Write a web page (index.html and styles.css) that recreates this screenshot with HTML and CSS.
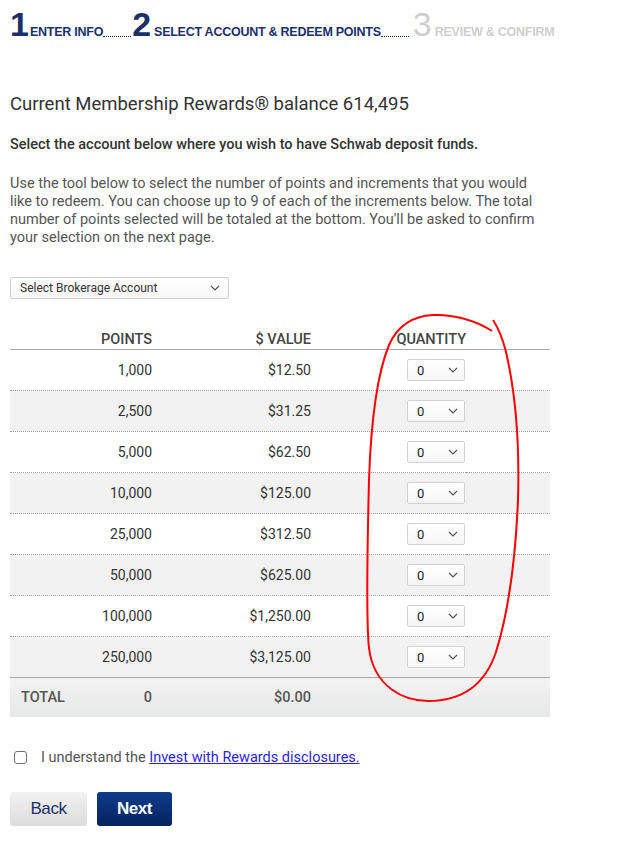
FILE: index.html
```html
<!DOCTYPE html>
<html>
<head>
<meta charset="utf-8">
<link rel="stylesheet" href="styles.css">
</head>
<body>
<div class="page">
  <div class="steps">
    <span class="step active"><span class="num num-1">1</span><span class="lbl">ENTER INFO</span></span>
    <span class="dots"></span>
    <span class="step active"><span class="num">2</span><span class="lbl">SELECT ACCOUNT &amp; REDEEM POINTS</span></span>
    <span class="dots dots-2"></span>
    <span class="step off"><span class="num">3</span><span class="lbl">REVIEW &amp; CONFIRM</span></span>
  </div>

  <h1 class="balance">Current Membership Rewards® balance 614,495</h1>
  <p class="lead">Select the account below where you wish to have Schwab deposit funds.</p>
  <p class="info">Use the tool below to select the number of points and increments that you would like to redeem. You can choose up to 9 of each of the increments below. The total number of points selected will be totaled at the bottom. You'll be asked to confirm your selection on the next page.</p>

  <div class="account-select">
    <span>Select Brokerage Account</span>
    <svg class="chev" width="10" height="6" viewBox="0 0 10 6"><path d="M1 1l4 4 4-4" fill="none" stroke="#555" stroke-width="1.2"/></svg>
  </div>

  <div class="table-wrap">
    <table class="points">
      <thead>
        <tr><th class="c-pts">POINTS</th><th class="c-val">$ VALUE</th><th class="c-qty">QUANTITY</th><th class="c-rest"></th></tr>
      </thead>
      <tbody>
        <tr><td class="c-pts">1,000</td><td class="c-val">$12.50</td><td class="c-qty"><span class="qty">0<svg width="10" height="6" viewBox="0 0 10 6"><path d="M1 1l4 4 4-4" fill="none" stroke="#555" stroke-width="1.2"/></svg></span></td><td></td></tr>
        <tr class="alt"><td class="c-pts">2,500</td><td class="c-val">$31.25</td><td class="c-qty"><span class="qty">0<svg width="10" height="6" viewBox="0 0 10 6"><path d="M1 1l4 4 4-4" fill="none" stroke="#555" stroke-width="1.2"/></svg></span></td><td></td></tr>
        <tr><td class="c-pts">5,000</td><td class="c-val">$62.50</td><td class="c-qty"><span class="qty">0<svg width="10" height="6" viewBox="0 0 10 6"><path d="M1 1l4 4 4-4" fill="none" stroke="#555" stroke-width="1.2"/></svg></span></td><td></td></tr>
        <tr class="alt"><td class="c-pts">10,000</td><td class="c-val">$125.00</td><td class="c-qty"><span class="qty">0<svg width="10" height="6" viewBox="0 0 10 6"><path d="M1 1l4 4 4-4" fill="none" stroke="#555" stroke-width="1.2"/></svg></span></td><td></td></tr>
        <tr><td class="c-pts">25,000</td><td class="c-val">$312.50</td><td class="c-qty"><span class="qty">0<svg width="10" height="6" viewBox="0 0 10 6"><path d="M1 1l4 4 4-4" fill="none" stroke="#555" stroke-width="1.2"/></svg></span></td><td></td></tr>
        <tr class="alt"><td class="c-pts">50,000</td><td class="c-val">$625.00</td><td class="c-qty"><span class="qty">0<svg width="10" height="6" viewBox="0 0 10 6"><path d="M1 1l4 4 4-4" fill="none" stroke="#555" stroke-width="1.2"/></svg></span></td><td></td></tr>
        <tr><td class="c-pts">100,000</td><td class="c-val">$1,250.00</td><td class="c-qty"><span class="qty">0<svg width="10" height="6" viewBox="0 0 10 6"><path d="M1 1l4 4 4-4" fill="none" stroke="#555" stroke-width="1.2"/></svg></span></td><td></td></tr>
        <tr class="alt"><td class="c-pts">250,000</td><td class="c-val">$3,125.00</td><td class="c-qty"><span class="qty">0<svg width="10" height="6" viewBox="0 0 10 6"><path d="M1 1l4 4 4-4" fill="none" stroke="#555" stroke-width="1.2"/></svg></span></td><td></td></tr>
      </tbody>
      <tfoot>
        <tr><td class="c-pts"><span class="total-lbl">TOTAL</span>0</td><td class="c-val">$0.00</td><td></td><td></td></tr>
      </tfoot>
    </table>
    <svg class="annot" width="160" height="400" viewBox="360 310 160 400"><path d="M492 331 C475 320 452 314 433 315 C412 316 397 327 389 345 C378 372 371 420 369 480 C367 560 366 620 369 648 C374 688 405 701 428 701 C458 701 484 688 496 652 C506 620 515 570 518 500 C520 432 513 382 506 352 C502 336 497 326 493 320" fill="none" stroke="#ff0000" stroke-width="2"/></svg>
  </div>

  <label class="agree">
    <span class="box"></span>
    <span class="agree-text">I understand the <a href="#">Invest with Rewards disclosures.</a></span>
  </label>

  <div class="buttons">
    <button class="btn back">Back</button>
    <button class="btn next">Next</button>
  </div>
</div>
</body>
</html>
```
FILE: styles.css
```css
* { box-sizing: border-box; }
body { margin: 0; background: #fff; font-family: Roboto, "Liberation Sans", sans-serif; color: #333; }
.page { padding: 10px 0 0 10px; width: 560px; }

.steps { display: flex; align-items: baseline; height: 30px; white-space: nowrap; }
.step { display: inline-flex; align-items: baseline; }
.num { font-family: "Liberation Sans", Arial, sans-serif; font-size: 34px; line-height: 28px; font-weight: 700; letter-spacing: -1px; }
.num-1 { margin-right: -2px; }
.lbl { font-family: "Liberation Sans", Arial, sans-serif; font-size: 12.5px; font-weight: 700; margin-left: 4px; letter-spacing: -0.25px; }
.step.active { color: #1b2f6a; }
.step.off { color: #cfcfcf; }
.step.off .num { font-weight: 400; }
.dots { width: 28px; border-bottom: 1px dotted #1b2f6a; margin: 0 1px 3px 0; align-self: flex-end; }
.dots-2 { margin-right: 4px; }

.balance { font-size: 18.5px; font-weight: 400; margin: 52px 0 0; line-height: 24px; color: #333; }
.lead { font-size: 14.5px; font-weight: 500; margin: 19px 0 0; line-height: 20px; color: #333; }
.info { font-size: 14.5px; line-height: 18px; margin: 20px 0 0; color: #555; width: 540px; }

.account-select { margin-top: 30px; width: 219px; height: 22px; border: 1px solid #cfcfcf; border-radius: 2px; background: linear-gradient(#fff, #f7f7f7); display: flex; align-items: center; justify-content: space-between; padding: 0 8px 0 9px; font-size: 12px; color: #333; }

.table-wrap { position: relative; margin-top: 21px; width: 540px; }
.points { width: 540px; border-collapse: collapse; font-size: 14px; color: #333; }
.points th { font-weight: 500; font-size: 14.5px; line-height: 18px; color: #444; height: 29px; vertical-align: top; padding: 11px 0 0; border-bottom: 1px solid #a8a8a8; }
.points td { height: 41px; padding: 0; border-bottom: 1px dotted #a0a0a0; vertical-align: middle; }
.points tbody tr:last-child td { border-bottom: none; }
.points tr.alt td { background: #f2f2f2; }
.c-pts { width: 142px; text-align: right; }
.c-val { width: 159px; text-align: right; }
.points th.c-qty { text-align: right; width: 155px; }
.points td.c-qty { padding-left: 96px; text-align: left; }
.qty { display: inline-flex; align-items: center; justify-content: space-between; width: 58px; height: 22px; border: 1px solid #d2d2d2; border-radius: 2px; background: linear-gradient(#fff, #f6f6f6); padding: 0 6px 0 9px; font-size: 13px; color: #222; }

.points tfoot td { height: 39px; border-top: 1px solid #aaa; border-bottom: none; background: linear-gradient(#f3f3f3, #e6e7e7); font-weight: 500; color: #555; font-size: 14.5px; }
.total-lbl { float: left; margin-left: 11px; }

.annot { position: absolute; left: 350px; top: -10px; pointer-events: none; overflow: visible; }

.agree { display: flex; align-items: center; margin-top: 32px; font-size: 14.5px; color: #555; }
.box { width: 13px; height: 13px; border: 1px solid #6f6f6f; border-radius: 3px; margin: 0 14px 0 4px; background: #fff; }
.agree a { color: #2a1fe0; text-decoration: underline; }

.buttons { display: flex; gap: 10px; margin-top: 26px; }
.btn { height: 34px; border: none; border-radius: 3px; font-family: "Liberation Sans", Arial, sans-serif; font-size: 17px; font-weight: 700; padding: 0; letter-spacing: -0.4px; }
.back { width: 77px; background: linear-gradient(#f2f2f2, #dcdcdc); color: #1b2f6a; font-weight: 400; }
.next { width: 75px; background: linear-gradient(#0d3d8a, #072260); color: #fff; }
```
